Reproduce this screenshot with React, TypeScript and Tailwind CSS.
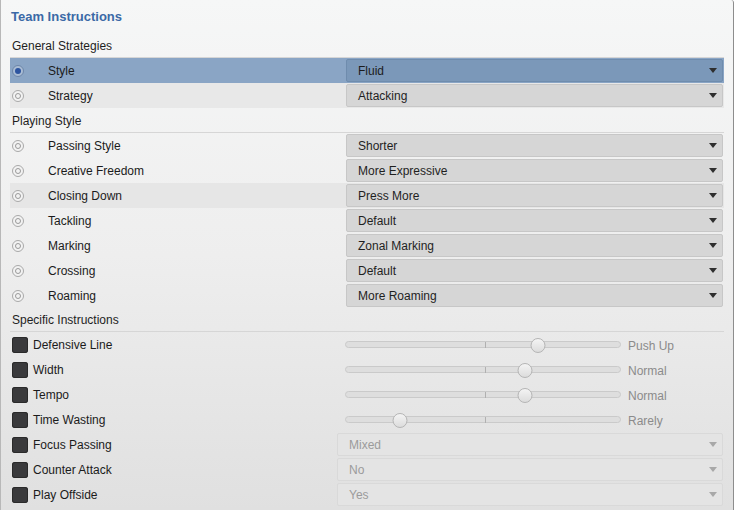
import React from "react"

type Tone = "active" | "normal" | "disabled"

const playing = [
  { label: "Passing Style", value: "Shorter" },
  { label: "Creative Freedom", value: "More Expressive" },
  { label: "Closing Down", value: "Press More", hover: true },
  { label: "Tackling", value: "Default" },
  { label: "Marking", value: "Zonal Marking" },
  { label: "Crossing", value: "Default" },
  { label: "Roaming", value: "More Roaming" },
]

const sliders = [
  { label: "Defensive Line", pos: 193, value: "Push Up" },
  { label: "Width", pos: 180, value: "Normal" },
  { label: "Tempo", pos: 180, value: "Normal" },
  { label: "Time Wasting", pos: 55, value: "Rarely" },
]

const locked = [
  { label: "Focus Passing", value: "Mixed" },
  { label: "Counter Attack", value: "No" },
  { label: "Play Offside", value: "Yes" },
]

function Radio({ on }: { on?: boolean }) {
  return (
    <span
      className={`ml-[2px] flex h-[12px] w-[12px] items-center justify-center rounded-full border ${
        on ? "border-[#6d86a8] bg-[#a9bcd4]" : "border-[#a9a9a9] bg-[#f2f2f2]"
      }`}
    >
      {on ? (
        <span className="h-[6px] w-[6px] rounded-full bg-[#2d55a0]" />
      ) : (
        <span className="h-[6px] w-[6px] rounded-full border border-[#9a9a9a]" />
      )}
    </span>
  )
}

function Caret({ tone }: { tone: Tone }) {
  const c = tone === "disabled" ? "border-t-[#a8a8a8]" : "border-t-[#2e2e2e]"
  return <span className={`h-0 w-0 border-x-[4px] border-t-[5px] border-x-transparent ${c}`} />
}

function Select({ value, tone }: { value: string; tone: Tone }) {
  const box =
    tone === "active"
      ? "bg-[#7b98b9] border-[#6f8cad] text-[#1c1c1c]"
      : tone === "disabled"
        ? "bg-[#e4e4e4] border-[#d9d9d9] text-[#9b9b9b]"
        : "bg-[#d6d6d6] border-[#c7c7c7] text-[#1f1f1f]"
  return (
    <div className={`flex h-[23px] flex-1 items-center justify-between rounded-[2px] border pl-[11px] pr-[5px] ${box}`}>
      <span className="pt-px">{value}</span>
      <Caret tone={tone} />
    </div>
  )
}

function Heading({ text, short }: { text: string; short?: boolean }) {
  return (
    <div
      className={`flex items-center border-b border-[#d6d6d6] pl-[2px] text-[#1e1e1e] ${
        short ? "h-[24px] pt-px" : "h-[25px] pt-[2px]"
      }`}
    >
      {text}
    </div>
  )
}

function Box() {
  return <span className="h-[16px] w-[16px] shrink-0 rounded-[3px] bg-[#3a3a3c] shadow-[inset_0_0_0_1px_#2a2a2a]" />
}

export default function App() {
  return (
    <div
      className="h-[510px] w-[735px] overflow-hidden text-[12px] leading-none"
      style={{ fontFamily: '"Liberation Sans", Arial, sans-serif' }}
    >
      <div className="h-full w-[734px] rounded-tr-[3px] border-l border-r border-l-[#b8b8b8] border-r-[#8d8d8d] bg-gradient-to-b from-[#f6f7f7] via-[#eeeeee] to-[#e0e0e0] pl-[9px] pr-[9px]">
        <div className="flex h-[33px] items-center pl-[1px] text-[13px] font-bold text-[#3b69a6]">Team Instructions</div>

        <Heading text="General Strategies" />
        <div className="flex h-[25px] items-center bg-[#8aa5c5]">
          <div className="flex w-[336px] items-center">
            <Radio on />
            <span className="ml-[24px] pt-px text-[#1b1b1b]">Style</span>
          </div>
          <Select value="Fluid" tone="active" />
          <span className="w-[1px]" />
        </div>
        <div className="flex h-[25px] items-center bg-[#e8e8e8]">
          <div className="flex w-[336px] items-center">
            <Radio />
            <span className="ml-[24px] pt-px text-[#1b1b1b]">Strategy</span>
          </div>
          <Select value="Attacking" tone="normal" />
          <span className="w-[1px]" />
        </div>

        <Heading text="Playing Style" />
        {playing.map((r) => (
          <div key={r.label} className={`flex h-[25px] items-center ${r.hover ? "bg-[#e6e6e6]" : ""}`}>
            <div className="flex w-[336px] items-center">
              <Radio />
              <span className="ml-[24px] pt-px text-[#1b1b1b]">{r.label}</span>
            </div>
            <Select value={r.value} tone="normal" />
            <span className="w-[1px]" />
          </div>
        ))}

        <Heading text="Specific Instructions" short />
        {sliders.map((s) => (
          <div key={s.label} className="flex h-[25px] items-center">
            <div className="flex w-[335px] items-center gap-[5px] pl-[2px]">
              <Box />
              <span className="pt-px text-[#1b1b1b]">{s.label}</span>
            </div>
            <div className="relative flex h-[14px] w-[276px] items-center">
              <div className="h-[7px] w-full rounded-full border border-[#cacaca] bg-[#dedede]" />
              <span className="absolute left-[140px] top-[4px] h-[6px] w-px bg-[#b0b0b0]" />
              <span
                className="absolute top-0 h-[15px] w-[15px] -translate-x-1/2 rounded-full border border-[#b5b5b5] bg-gradient-to-b from-[#f4f4f4] to-[#dcdcdc]"
                style={{ left: s.pos }}
              />
            </div>
            <span className="ml-[7px] mt-[2px] text-[#8b8b8b]">{s.value}</span>
          </div>
        ))}
        {locked.map((s) => (
          <div key={s.label} className="flex h-[25px] items-center">
            <div className="flex w-[327px] items-center gap-[5px] pl-[2px]">
              <Box />
              <span className="pt-px text-[#1b1b1b]">{s.label}</span>
            </div>
            <Select value={s.value} tone="disabled" />
            <span className="w-[1px]" />
          </div>
        ))}
      </div>
    </div>
  )
}
